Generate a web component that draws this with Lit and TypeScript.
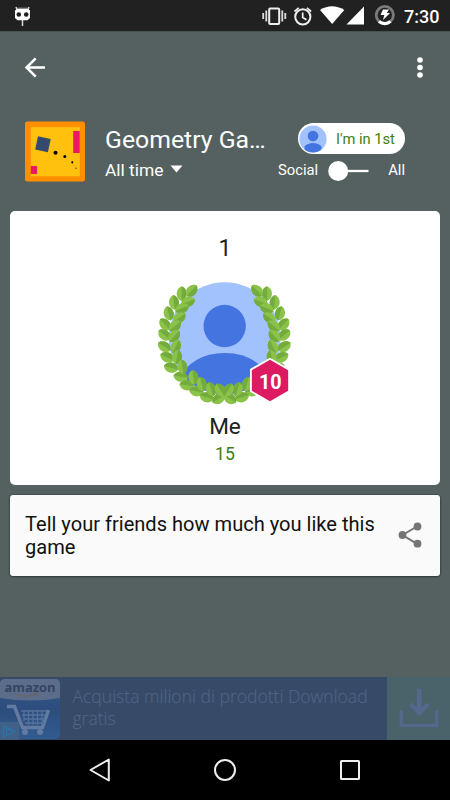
import { LitElement, html, svg, css } from "lit";
import { customElement } from "lit/decorators.js";

// x, y and heading (degrees clockwise from straight up) of each leaf on the left branch
const LEAVES: [number, number, number][] = [
  [95, 71, 0], [125, 62, 42],
  [72, 97, -6], [114, 95, 70],
  [56, 130, -14], [96, 115, 68],
  [45, 163, -42], [88, 143, 55],
  [43, 195, -50], [75, 168, 50],
  [43, 230, -58], [73, 198, 40],
  [51, 262, -65], [77, 230, 26],
  [63, 293, -76], [81, 261, 10],
  [92, 320, -82], [97, 290, -8],
  [110, 346, -82], [130, 322, -8],
  [139, 364, -80], [155, 342, -14],
  [170, 382, -74], [183, 358, -18],
  [206, 386, -125], [211, 360, -32],
];

@customElement("laurel-avatar")
export class LaurelAvatar extends LitElement {
  static styles = css`
    :host { display: block; width: 150px; height: 140px; }
    svg { display: block; }
    .num { font: 700 61px Roboto, sans-serif; fill: #fff; text-anchor: middle; }
  `;
  private branch() {
    return LEAVES.map(([x, y, a]) => svg`
      <g transform="translate(${x} ${y}) rotate(${a})">
        <path d="M0-22C-20-14-20 15 0 22C20 15 20-14 0-22Z" fill="#8bc34a"/>
        <path d="M0-22C20-14 20 15 0 22Z" fill="#74ab3d"/>
      </g>`);
  }
  render() {
    return html`<svg width="150" height="140" viewBox="0 0 450 420">
      <defs><clipPath id="disc"><circle cx="224" cy="205" r="168"/></clipPath></defs>
      <g clip-path="url(#disc)">
        <rect width="450" height="420" fill="#a1c2fd"/>
        <circle cx="224" cy="168" r="63.5" fill="#4374e0"/>
        <path d="M80 400V335Q125 249 224 249T368 335V400Z" fill="#4374e0"/>
      </g>
      ${this.branch()}
      <g transform="matrix(-1 0 0 1 446 0)">${this.branch()}</g>
      <path d="M360 263L420 297V365L360 399L300 365V297Z" fill="#fff"/>
      <path d="M360 272L412 302V361L360 391L308 361V302Z" fill="#dc1b62" stroke="#dc1b62" stroke-width="5" stroke-linejoin="round"/>
      <text class="num" x="361" y="358" textLength="68" lengthAdjust="spacingAndGlyphs">10</text>
    </svg>`;
  }
}

@customElement("app-root")
export class AppRoot extends LitElement {
  static styles = css`
    :host { display: flex; flex-direction: column; box-sizing: border-box; width: 450px; height: 800px; overflow: hidden; background: #546160; font-family: Roboto, sans-serif; color: #fff; }
    svg { display: block; flex: none; }
    .status { height: 31px; background: #212121; border-bottom: 1px solid #485352; box-sizing: content-box; display: flex; justify-content: space-between; flex: none; }
    .right { display: flex; }
    .clock { width: 46px; font-weight: 500; font-size: 18px; line-height: 33px; white-space: nowrap; }
    .bar { height: 72px; flex: none; display: flex; justify-content: space-between; align-items: center; padding: 0 20px 0 23px; }
    .head { height: 107px; flex: none; box-sizing: border-box; padding: 17px 45px 0 25px; display: flex; }
    .titles { margin: 1px 0 0 20px; width: 165px; white-space: nowrap; }
    .title { font-size: 24.8px; line-height: 36px; }
    .period { display: flex; align-items: center; gap: 6px; font-size: 17.4px; line-height: 24px; }
    .side { flex: 1; display: flex; flex-direction: column; align-items: flex-end; }
    .pill { width: 107px; height: 31px; box-sizing: border-box; margin-top: 2px; border-radius: 16px; background: #fff; display: flex; align-items: center; padding-left: 1px; gap: 9px; color: #3f7e0c; font-size: 14.7px; white-space: nowrap; }
    .toggle { display: flex; align-items: center; justify-content: space-between; width: 127px; height: 32px; font-size: 14.8px; }
    .card { margin: 0 10px; height: 274px; flex: none; background: #fff; border-radius: 5px; color: #212121; display: flex; flex-direction: column; align-items: center; text-align: center; }
    .rank { font-size: 23px; line-height: 28px; margin-top: 24px; height: 35px; }
    .me { font-size: 22.6px; line-height: 28px; margin-top: 3px; }
    .score { font-size: 17.6px; line-height: 24px; color: #3f7e0c; margin-top: 1px; }
    .share { margin: 10px 10px 0; height: 81px; flex: none; box-sizing: border-box; background: #fafafa; border-radius: 3px; box-shadow: 0 0 2px #16302f, 0 1px 2px #354342; color: #111; display: flex; align-items: center; justify-content: space-between; padding: 0 18px 2px 15px; font-size: 20.07px; line-height: 23px; }
    .copy { width: 360px; white-space: nowrap; padding-top: 2px; }
    .ad { margin-top: auto; height: 63px; flex: none; display: flex; background: #374b69; color: #516789; font: 300 17.55px/22px "Open Sans", sans-serif; }
    .adtext { flex: 1; padding: 8px 0 0 12.5px; white-space: nowrap; }
    .get { width: 63px; background: #4a6269; }
    .brand { font: 700 12.5px "Open Sans", sans-serif; fill: #344461; }
    .nav { height: 60px; flex: none; background: #000; display: flex; justify-content: center; align-items: center; gap: 101px; }
  `;
  render() {
    return html`
      <div class="status">
        <svg width="45" height="31" viewBox="0 0 45 31">
          <path d="M16 7l1.5 4M29 7l-1.5 4M22.5 19v7" stroke="#d8d8d8" stroke-width="1.5"/>
          <path d="M17.5 8.5h10l2.5 2v7.5l-2.5 2.3h-10L15 18v-7.500z" fill="#fff"/>
          <path d="M17.5 8.100h10" stroke="#888"/>
          <circle cx="18.800" cy="14.500" r="2.300" fill="#212121"/><circle cx="26.200" cy="14.500" r="2.300" fill="#212121"/>
        </svg>
        <div class="right">
          <svg width="144" height="31" viewBox="261 0 144 31" fill="none">
            <rect x="270.200" y="8.500" width="10" height="15.500" rx="1" stroke="#eee" stroke-width="2"/>
            <path d="M267.300 10.500v11M283.300 10.500v11M264.200 13v6M286.300 13v6" stroke="#ddd" stroke-width="1.800"/>
            <circle cx="303.800" cy="16.800" r="7.600" stroke="#eee" stroke-width="2"/>
            <path d="M303.700 12.500v5l3.800 2.200M295.500 11.500l4.200-3.700M312.100 11.500l-4.200-3.700" stroke="#eee" stroke-width="1.700"/>
            <path d="M321 10Q333 2.500 345.300 10L333.200 24Z" fill="#fff"/>
            <path d="M365 6.500V24.500H347.500Z" fill="#fff"/>
            <circle cx="385.800" cy="15" r="8.600" stroke="#7b7b7b" stroke-width="2.800"/>
            <path d="M380 21.400a8.600 8.600 0 0 0 11.500 0" stroke="#fff" stroke-width="3.200"/>
            <path d="M384 9.500h6l-2.200 3.500h3.200l-7 7 1.300-5h-3.800z" fill="#fff"/>
          </svg>
          <div class="clock">7:30</div>
        </div>
      </div>
      <div class="bar">
        <svg width="24" height="24" viewBox="0 0 24 24" fill="none" stroke="#fff" stroke-width="2.500"><path d="M22 11.500H4M12.700 2.300L3.500 11.500l9.200 9.200"/></svg>
        <svg width="20" height="24" viewBox="0 0 20 24" fill="#fff"><circle cx="10" cy="4" r="2.800"/><circle cx="10" cy="11.500" r="2.800"/><circle cx="10" cy="19" r="2.800"/></svg>
      </div>
      <div class="head">
        <svg width="60" height="61" viewBox="0 0 60 61">
          <rect y=".5" width="60" height="60" rx="2.500" fill="#ff8f00"/><rect x="5.800" y="6.200" width="49" height="49" fill="#ffc10e"/>
          <rect x="48.200" y="10" width="6.500" height="22" fill="#ec1763"/><rect x="5.800" y="45" width="6.300" height="8" fill="#ec1763"/>
          <rect x="11.500" y="16.500" width="13" height="13.500" fill="#364a70" transform="rotate(12 18 23)"/>
          <circle cx="30.500" cy="31.800" r="2"/><circle cx="39.800" cy="35.500" r="1.500"/><circle cx="47.300" cy="41.300" r="1.100"/><circle cx="51" cy="47.200" r=".8" fill="#654d08"/>
        </svg>
        <div class="titles">
          <div class="title">Geometry Ga…</div>
          <div class="period">All time<svg width="13" height="10" viewBox="0 0 13 10"><path d="M.5 .5h12l-6 7z" fill="#fff"/></svg></div>
        </div>
        <div class="side">
          <div class="pill">
            <svg width="28" height="28" viewBox="0 0 28 28"><defs><clipPath id="a"><circle cx="14" cy="14" r="13.600"/></clipPath></defs><g clip-path="url(#a)"><path fill="#a1c2fd" d="M0 0h28v28H0z"/><circle cx="14" cy="11" r="5.300" fill="#4374e0"/><path d="M5.500 28v-6.500C9 16.700 19 16.700 22.500 21.500V28z" fill="#4374e0"/></g></svg>
            <span>I'm in 1st</span>
          </div>
          <div class="toggle"><span>Social</span><svg width="50" height="22" viewBox="0 0 50 22"><path d="M18 12h22.500" stroke="#fff" stroke-width="2.300"/><circle cx="10.200" cy="12" r="10" fill="#fff"/></svg><span>All</span></div>
        </div>
      </div>
      <div class="card">
        <div class="rank">1</div>
        <laurel-avatar></laurel-avatar>
        <div class="me">Me</div>
        <div class="score">15</div>
      </div>
      <div class="share">
        <div class="copy">Tell your friends how much you like this<br>game</div>
        <svg width="24" height="26" viewBox="0 0 24 26" fill="#757575"><path d="M19 4.500L4.500 13 19 21.800" fill="none" stroke="#757575" stroke-width="2"/><circle cx="19.500" cy="4.500" r="3.900"/><circle cx="4.500" cy="13" r="3.900"/><circle cx="19.500" cy="21.700" r="3.900"/></svg>
      </div>
      <div class="ad">
        <svg width="60" height="63" viewBox="0 0 60 63">
          <defs><linearGradient id="b" x2="0" y2="1"><stop stop-color="#355887"/><stop offset=".5" stop-color="#2c4d7d"/><stop offset="1" stop-color="#315c91"/></linearGradient></defs>
          <rect y="2" width="60" height="60" rx="5" fill="url(#b)"/>
          <path d="M0 21V7Q0 2 5 2H55Q60 2 60 7V21Q30 26 0 21Z" fill="#5b6d8a"/>
          <text class="brand" x="4.500" y="14.500" textLength="51" lengthAdjust="spacingAndGlyphs">amazon</text>
          <path d="M14 16.500Q27 22 37 16.500M34 15.500l4 .3-1.500 3.700" fill="none" stroke="#696568" stroke-width="1.300"/>
          <path d="M7 29.500h7.500l8 21h20l6-17.500" fill="none" stroke="#637b9e" stroke-width="3.500"/>
          <path d="M21 34h26M22 38h24M24 42h21M25 46h19M24 33v11M28.500 33v15M33 33v15M37.500 33v15M42 33v15" stroke="#56719a" stroke-width="1.300"/>
          <circle cx="25" cy="55" r="3" fill="#637b9e"/><circle cx="40" cy="55" r="3" fill="#637b9e"/>
          <path d="M0 45h19v18H0z" fill="#456386" opacity=".8"/><path d="M3.500 48.500v11.500L15 54.200zM6.500 51.500v5.500M6.500 51l5 3" fill="none" stroke="#2f72a6" stroke-width="1.200"/>
        </svg>
        <div class="adtext">Acquista milioni di prodotti Download<br>gratis</div>
        <div class="get"><svg width="63" height="63" viewBox="0 0 63 63" fill="none" stroke="#52698b"><path d="M14.300 34.500V48.500H49.700V34.500" stroke-width="3.500" stroke-linejoin="round" stroke-linecap="round"/><path d="M32.300 12V34" stroke-width="5"/><path d="M23.500 27l8.800 9 8.800-9" stroke-width="4.500"/></svg></div>
      </div>
      <div class="nav">
        <svg width="24" height="26" viewBox="0 0 24 26" fill="none" stroke="#eee" stroke-width="2" stroke-linejoin="round"><path d="M20.800 2.500v21L2.500 13z"/></svg>
        <svg width="24" height="24" viewBox="0 0 24 24" fill="none" stroke="#eee" stroke-width="2"><circle cx="12" cy="12" r="10"/></svg>
        <svg width="24" height="24" viewBox="0 0 24 24" fill="none" stroke="#eee" stroke-width="2"><rect x="3" y="3" width="18" height="18" rx=".5"/></svg>
      </div>`;
  }
}
